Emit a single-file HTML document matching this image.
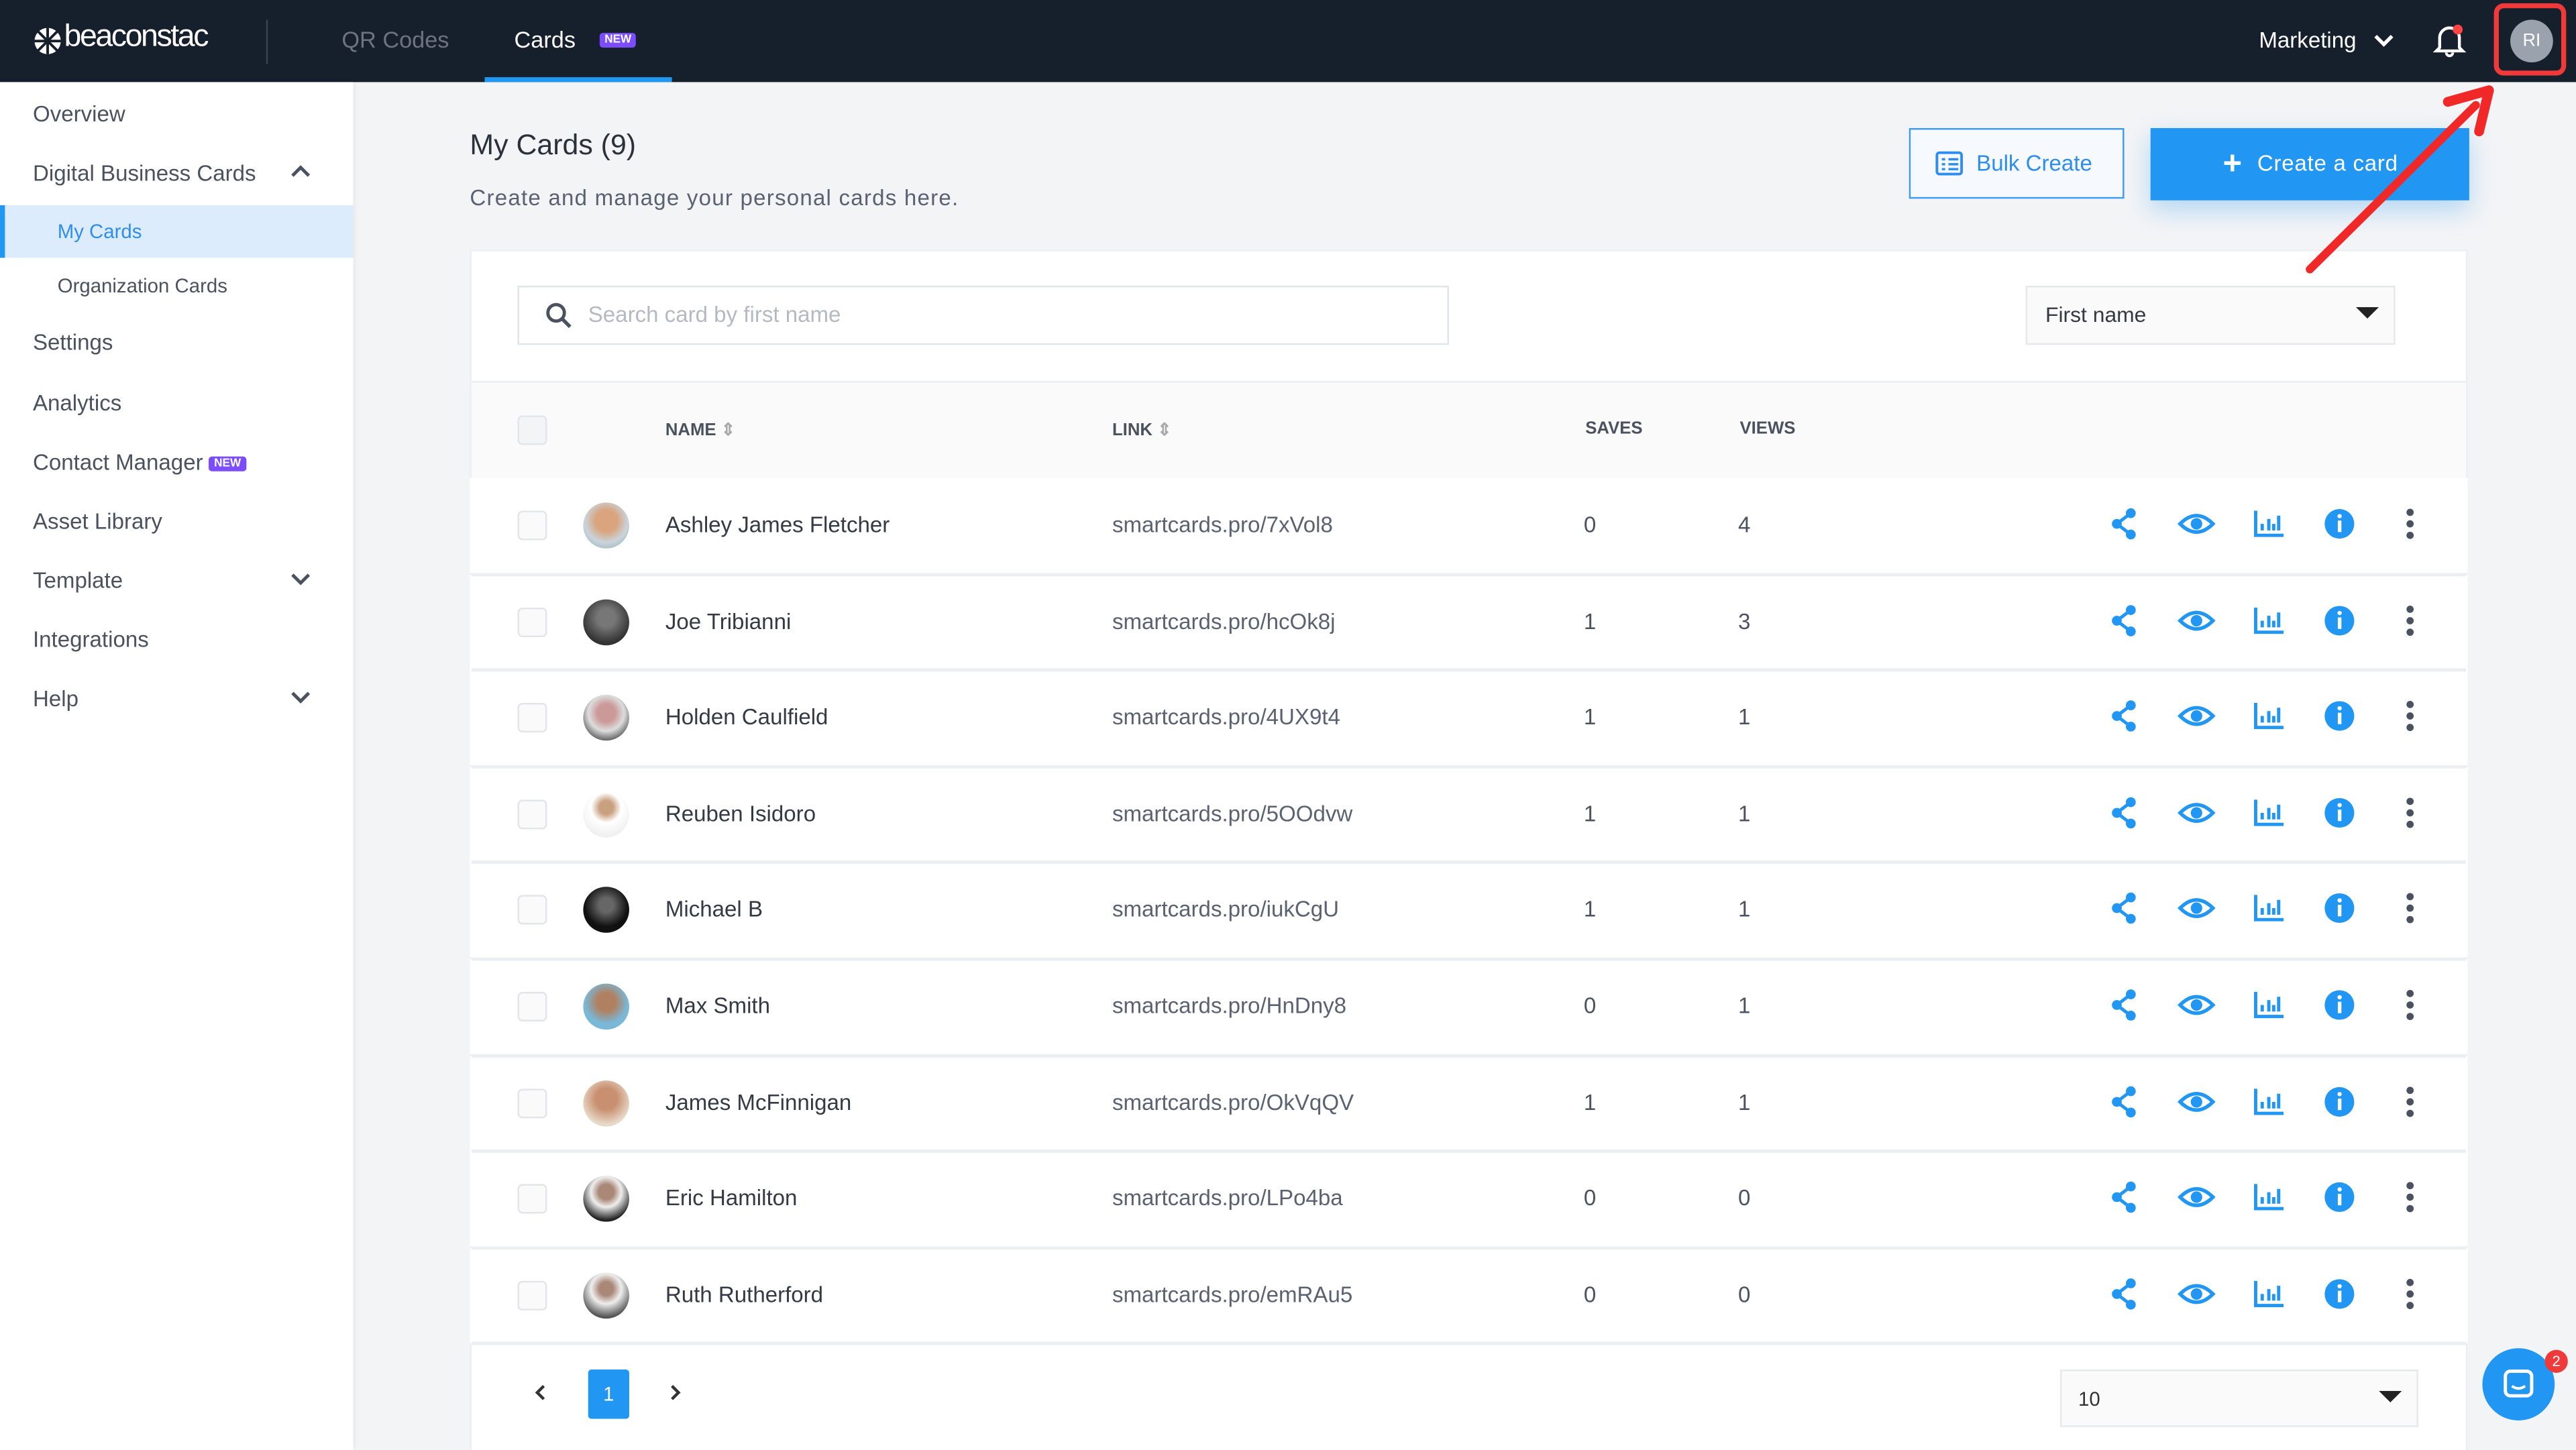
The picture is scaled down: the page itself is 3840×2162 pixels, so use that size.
<!DOCTYPE html>
<html><head><meta charset="utf-8"><style>
html,body{margin:0;padding:0;width:3840px;height:2162px;overflow:hidden;background:#f3f4f6}
#w{position:absolute;left:0;top:0;width:1568px;height:883px;transform:scale(2.449,2.4485);transform-origin:0 0;font-family:"Liberation Sans",sans-serif;background:#f3f4f6;overflow:hidden}
.a{position:absolute}
.top{left:0;top:0;width:1568px;height:50px;background:#161f2c}
.side{left:0;top:50px;width:215px;height:833px;background:#fff;box-shadow:1px 0 3px rgba(0,0,0,.06)}
.si{position:absolute;left:20px;font-size:13.5px;color:#4a5260}
.sub{left:35px;font-size:12px}
.new{display:inline-block;background:#7b4dff;color:#fff;font-size:7px;font-weight:bold;padding:1px 3px;border-radius:2px;vertical-align:middle}
.row{position:absolute;left:286px;width:1216px;height:58px;background:#fff;font-size:13.5px;color:#333a44}
.row>*{position:absolute}
.ln{position:absolute;left:287px;width:1214px;height:2px;background:#eceef1}
.cb{left:29px;top:20px;width:16px;height:16px;border:1px solid #e3e5e8;border-radius:3px;background:#fafafa}
.av{left:69px;top:15px;width:28px;height:28px;border-radius:50%}
.nm{left:119px;top:21px}
.lk{left:391px;top:21px;color:#5a6272}
.sv{left:678px;top:21px;color:#4a5260}
.vw{left:772px;top:21px;color:#4a5260}
.ic{top:18px}
</style></head><body><div id="w">
<div class="a top"></div>
<svg class="a" style="left:20px;top:15px" width="18" height="20" viewBox="0 0 18 20"><circle cx="9" cy="10" r="8" fill="#fff"/><path d="M9 2V18M1 10H17M3 4L15 16M15 4L3 16" stroke="#161f2c" stroke-width="1.6"/></svg>
<div class="a" style="left:39px;top:12px;color:#fff;font-size:19px;letter-spacing:-1px">beaconstac</div>
<div class="a" style="left:162px;top:12px;width:1px;height:27px;background:#3a4350"></div>
<div class="a" style="left:208px;top:16px;color:#6d7480;font-size:14px">QR Codes</div>
<div class="a" style="left:313px;top:16px;color:#fff;font-size:14px">Cards</div>
<div class="a new" style="left:365px;top:20px">NEW</div>
<div class="a" style="left:295px;top:47px;width:114px;height:3px;background:#2196f3"></div>
<div class="a" style="left:1375px;top:17px;color:#fff;font-size:13.5px">Marketing</div>
<svg class="a" style="left:1445px;top:20px" width="12" height="10"><path d="M1 2L6 7L11 2" stroke="#fff" stroke-width="2.2" fill="none"/></svg>
<svg class="a" style="left:1480px;top:13px" width="22" height="22" viewBox="0 0 22 22"><path d="M5 16V10a6 6 0 0112 0v6l2 2H3z" stroke="#fff" stroke-width="1.8" fill="none"/><path d="M9 19a2 2 0 004 0" stroke="#fff" stroke-width="1.6" fill="none"/><circle cx="16" cy="5" r="3" fill="#f44"/></svg>
<div class="a" style="left:1518px;top:2px;width:44px;height:44px;border:3px solid #f03a3a;border-radius:6px;box-sizing:border-box"></div>
<div class="a" style="left:1528px;top:12px;width:26px;height:26px;border-radius:50%;background:#9aa3ad;color:#fff;font-size:11px;text-align:center;line-height:26px">RI</div>

<div class="a side">
<div class="si" style="top:12px">Overview</div>
<div class="si" style="top:48px">Digital Business Cards</div>
<svg class="a" style="left:177px;top:50px" width="12" height="10"><path d="M1 7L6 2L11 7" stroke="#4a5260" stroke-width="2" fill="none"/></svg>
<div class="a" style="left:0;top:75px;width:215px;height:32px;background:#dcecfd"></div>
<div class="a" style="left:0;top:75px;width:3px;height:32px;background:#2196f3"></div>
<div class="si sub" style="top:84px;color:#2e8ef0">My Cards</div>
<div class="si sub" style="top:117px">Organization Cards</div>
<div class="si" style="top:151px">Settings</div>
<div class="si" style="top:188px">Analytics</div>
<div class="si" style="top:224px">Contact Manager <span class="new">NEW</span></div>
<div class="si" style="top:260px">Asset Library</div>
<div class="si" style="top:296px">Template</div>
<svg class="a" style="left:177px;top:298px" width="12" height="10"><path d="M1 2L6 7L11 2" stroke="#4a5260" stroke-width="2" fill="none"/></svg>
<div class="si" style="top:332px">Integrations</div>
<div class="si" style="top:368px">Help</div>
<svg class="a" style="left:177px;top:370px" width="12" height="10"><path d="M1 2L6 7L11 2" stroke="#4a5260" stroke-width="2" fill="none"/></svg>
</div>

<div class="a" style="left:286px;top:78px;font-size:17.5px;color:#2b313b">My Cards (9)</div>
<div class="a" style="left:286px;top:113px;font-size:13.5px;color:#5a6272;letter-spacing:.5px">Create and manage your personal cards here.</div>
<div class="a" style="left:1162px;top:78px;width:131px;height:43px;border:1px solid #3d9bf2;background:#f6f9fd;box-sizing:border-box;color:#2e8ef0;font-size:13.5px;line-height:41px;text-indent:40px">Bulk Create</div>
<svg class="a" style="left:1178px;top:92px" width="17" height="15"><rect x="1" y="1" width="15" height="13" rx="1.5" fill="none" stroke="#2e8ef0" stroke-width="1.6"/><path d="M4 5h2M8 5h6M4 8h2M8 8h6M4 11h2M8 11h6" stroke="#2e8ef0" stroke-width="1.4"/></svg>
<div class="a" style="left:1309px;top:78px;width:194px;height:44px;background:#2196f3;box-shadow:0 6px 14px rgba(33,150,243,.3);color:#fff;font-size:13.5px;line-height:44px;text-indent:65px;letter-spacing:.3px">Create a card</div>
<div class="a" style="left:1353px;top:89px;color:#fff;font-size:20px;font-weight:bold">+</div>

<div class="a" style="left:286px;top:152px;width:1216px;height:740px;background:#fff;border:1px solid #eceef1;box-sizing:border-box"></div>
<div class="a" style="left:315px;top:174px;width:567px;height:36px;border:1px solid #e1e4e8;box-sizing:border-box;background:#fff"></div>
<svg class="a" style="left:332px;top:184px" width="16" height="16"><circle cx="6.5" cy="6.5" r="5" stroke="#4a5260" stroke-width="2" fill="none"/><path d="M10 10L15 15" stroke="#4a5260" stroke-width="2.2"/></svg>
<div class="a" style="left:358px;top:184px;font-size:13.5px;color:#b5bac2">Search card by first name</div>
<div class="a" style="left:1233px;top:174px;width:225px;height:36px;border:1px solid #e6e8eb;box-sizing:border-box;background:#fafafa"></div>
<div class="a" style="left:1245px;top:184px;font-size:13px;color:#333a44">First name</div>
<svg class="a" style="left:1434px;top:187px" width="14" height="8"><path d="M0 0H14L7 7z" fill="#222"/></svg>

<div class="a" style="left:287px;top:232px;width:1214px;height:58px;background:#fafafa;border-top:1px solid #eceef1;border-bottom:1px solid #eceef1"></div>
<div class="a" style="left:315px;top:253px;width:16px;height:16px;border:1px solid #e3e5e8;border-radius:3px;background:#f3f4f6"></div>
<div class="a" style="left:405px;top:256px;font-size:10.5px;font-weight:bold;color:#4a5260">NAME <span style="color:#aaa">⇕</span></div>
<div class="a" style="left:677px;top:256px;font-size:10.5px;font-weight:bold;color:#4a5260">LINK <span style="color:#aaa">⇕</span></div>
<div class="a" style="left:965px;top:255px;font-size:10.5px;font-weight:bold;color:#4a5260">SAVES</div>
<div class="a" style="left:1059px;top:255px;font-size:10.5px;font-weight:bold;color:#4a5260">VIEWS</div>

<svg width="0" height="0" style="position:absolute"><defs>
<g id="icons">
<g transform="translate(999,0)"><circle cx="12" cy="3.5" r="3" fill="#2196f3"/><circle cx="12" cy="16.5" r="3" fill="#2196f3"/><circle cx="3.5" cy="10" r="3" fill="#2196f3"/><path d="M12 3.5L3.5 10L12 16.5" stroke="#2196f3" stroke-width="2" fill="none"/></g>
<g transform="translate(1041,0)"><path d="M0 10Q10 0 20 10Q10 20 0 10z" fill="none" stroke="#2196f3" stroke-width="2.2"/><circle cx="10" cy="10" r="3.5" fill="#2196f3"/></g>
<g transform="translate(1086,1)"><path d="M1 1V16H18" stroke="#2196f3" stroke-width="2" fill="none"/><path d="M5 13V9M9 13V6M12 13V9M15 13V4" stroke="#2196f3" stroke-width="2"/></g>
<g transform="translate(1129,0)"><circle cx="9" cy="10" r="9" fill="#2196f3"/><rect x="8" y="8" width="2.2" height="7" fill="#fff"/><circle cx="9.1" cy="5.3" r="1.3" fill="#fff"/></g>
<g transform="translate(1178,0)"><circle cx="3" cy="3" r="2.2" fill="#4a5260"/><circle cx="3" cy="10" r="2.2" fill="#4a5260"/><circle cx="3" cy="17" r="2.2" fill="#4a5260"/></g>
</g></defs></svg>

<div class="row" style="top:291px"><div class="cb"></div><div class="av" style="background:radial-gradient(circle at 50% 40%,#d9a47e 30%,#c9d4dc 60%,#8aa 100%)"></div><div class="nm">Ashley James Fletcher</div><div class="lk">smartcards.pro/7xVol8</div><div class="sv">0</div><div class="vw">4</div><svg class="ic" width="1216" height="20"><use href="#icons"/></svg></div>
<div class="row" style="top:350px"><div class="cb"></div><div class="av" style="background:radial-gradient(circle at 50% 40%,#777 25%,#333 70%)"></div><div class="nm">Joe Tribianni</div><div class="lk">smartcards.pro/hcOk8j</div><div class="sv">1</div><div class="vw">3</div><svg class="ic" width="1216" height="20"><use href="#icons"/></svg></div>
<div class="row" style="top:408px"><div class="cb"></div><div class="av" style="background:radial-gradient(circle at 50% 40%,#c99 25%,#ddd 50%,#555 80%)"></div><div class="nm">Holden Caulfield</div><div class="lk">smartcards.pro/4UX9t4</div><div class="sv">1</div><div class="vw">1</div><svg class="ic" width="1216" height="20"><use href="#icons"/></svg></div>
<div class="row" style="top:467px"><div class="cb"></div><div class="av" style="background:radial-gradient(circle at 50% 35%,#c9a080 18%,#fff 40%,#eee 80%)"></div><div class="nm">Reuben Isidoro</div><div class="lk">smartcards.pro/5OOdvw</div><div class="sv">1</div><div class="vw">1</div><svg class="ic" width="1216" height="20"><use href="#icons"/></svg></div>
<div class="row" style="top:525px"><div class="cb"></div><div class="av" style="background:radial-gradient(circle at 50% 40%,#666 20%,#111 60%)"></div><div class="nm">Michael B</div><div class="lk">smartcards.pro/iukCgU</div><div class="sv">1</div><div class="vw">1</div><svg class="ic" width="1216" height="20"><use href="#icons"/></svg></div>
<div class="row" style="top:584px"><div class="cb"></div><div class="av" style="background:radial-gradient(circle at 50% 40%,#b08060 25%,#7ab8d8 60%)"></div><div class="nm">Max Smith</div><div class="lk">smartcards.pro/HnDny8</div><div class="sv">0</div><div class="vw">1</div><svg class="ic" width="1216" height="20"><use href="#icons"/></svg></div>
<div class="row" style="top:643px"><div class="cb"></div><div class="av" style="background:radial-gradient(circle at 50% 40%,#c89070 30%,#e8d8c8 70%)"></div><div class="nm">James McFinnigan</div><div class="lk">smartcards.pro/OkVqQV</div><div class="sv">1</div><div class="vw">1</div><svg class="ic" width="1216" height="20"><use href="#icons"/></svg></div>
<div class="row" style="top:701px"><div class="cb"></div><div class="av" style="background:radial-gradient(circle at 50% 35%,#a87 20%,#eee 40%,#222 75%)"></div><div class="nm">Eric Hamilton</div><div class="lk">smartcards.pro/LPo4ba</div><div class="sv">0</div><div class="vw">0</div><svg class="ic" width="1216" height="20"><use href="#icons"/></svg></div>
<div class="row" style="top:760px"><div class="cb"></div><div class="av" style="background:radial-gradient(circle at 50% 35%,#a87 18%,#eee 40%,#555 75%)"></div><div class="nm">Ruth Rutherford</div><div class="lk">smartcards.pro/emRAu5</div><div class="sv">0</div><div class="vw">0</div><svg class="ic" width="1216" height="20"><use href="#icons"/></svg></div>
<div class="ln" style="top:349px"></div>
<div class="ln" style="top:407px"></div>
<div class="ln" style="top:466px"></div>
<div class="ln" style="top:524px"></div>
<div class="ln" style="top:583px"></div>
<div class="ln" style="top:642px"></div>
<div class="ln" style="top:700px"></div>
<div class="ln" style="top:759px"></div>
<div class="ln" style="top:817px"></div>

<svg class="a" style="left:325px;top:843px" width="8" height="10"><path d="M6 1L2 5L6 9" stroke="#333" stroke-width="1.8" fill="none"/></svg>
<div class="a" style="left:358px;top:834px;width:25px;height:30px;background:#2196f3;border-radius:2px;color:#fff;font-size:12px;text-align:center;line-height:30px">1</div>
<svg class="a" style="left:407px;top:843px" width="8" height="10"><path d="M2 1L6 5L2 9" stroke="#333" stroke-width="1.8" fill="none"/></svg>
<div class="a" style="left:1254px;top:834px;width:218px;height:35px;border:1px solid #e6e8eb;box-sizing:border-box;background:#fafafa"></div>
<div class="a" style="left:1265px;top:845px;font-size:12px;color:#333">10</div>
<svg class="a" style="left:1448px;top:847px" width="14" height="8"><path d="M0 0H14L7 7z" fill="#222"/></svg>

<div class="a" style="left:1511px;top:821px;width:44px;height:44px;border-radius:50%;background:#2196f3"></div>
<svg class="a" style="left:1523px;top:833px" width="20" height="20"><rect x="2" y="2" width="16" height="15" rx="3" fill="none" stroke="#fff" stroke-width="2"/><path d="M6 11Q10 14 14 11" stroke="#fff" stroke-width="1.6" fill="none"/></svg>
<div class="a" style="left:1549px;top:822px;width:14px;height:14px;border-radius:50%;background:#f03a3a;color:#fff;font-size:9px;text-align:center;line-height:14px">2</div>

<svg class="a" style="left:0;top:0" width="1568" height="883"><path d="M1406 164L1507 64" stroke="#f02828" stroke-width="5" stroke-linecap="round"/><path d="M1515 55L1490 62M1515 55L1509 80" stroke="#f02828" stroke-width="6" stroke-linecap="round"/></svg>
</div></body></html>
